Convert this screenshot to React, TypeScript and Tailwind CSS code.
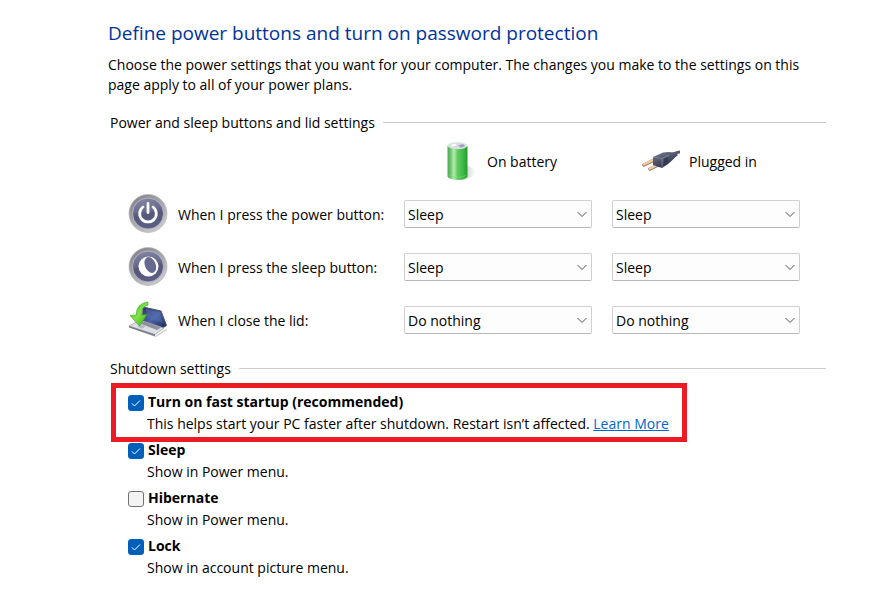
import { FC, ReactNode, useState } from 'react';

interface PowerActionRowProps {
  id: string;
  label: string;
  icon: ReactNode;
  action: string;
}

interface ShutdownOptionProps {
  id: string;
  title: string;
  defaultChecked?: boolean;
  highlighted?: boolean;
  children: ReactNode;
}

const ACTIONS = ['Do nothing', 'Sleep', 'Hibernate', 'Shut down'];

const BatteryIcon: FC = () => (
  <svg viewBox="0 0 40 40" className="size-10 shrink-0" aria-hidden="true">
    <defs>
      <linearGradient id="cell" x1="0" x2="1">
        <stop offset="0" stopColor="#4fa552" />
        <stop offset="0.15" stopColor="#6cc46e" />
        <stop offset="0.32" stopColor="#b4edb0" />
        <stop offset="0.5" stopColor="#5fcb5f" />
        <stop offset="0.8" stopColor="#3db544" />
        <stop offset="1" stopColor="#239a2d" />
      </linearGradient>
      <linearGradient id="cellShadow" x1="0" x2="1">
        <stop offset="0" stopColor="#777" stopOpacity="0.6" />
        <stop offset="1" stopColor="#aaa" stopOpacity="0" />
      </linearGradient>
    </defs>
    <path d="M27 24 37 29 Q38 34 28 38 L21 39Z" fill="url(#cellShadow)" />
    <path d="M8.500 5v30.500c2 4.500 18 4.500 20 0V5Z" fill="url(#cell)" />
    <ellipse cx="18.500" cy="4.700" rx="10" ry="3.500" fill="#cfe6d2" />
    <ellipse cx="18.500" cy="4.300" rx="7.500" ry="2.600" fill="#dcdbea" />
    <path d="M19 4.500 24 3l2 2-4 1.800Z" fill="#9f9ec2" />
    <path d="m12 4 4-1.400 1.500 1.700-4 1.500Z" fill="#fff" />
    <path d="M10 34c3 3 14 3 17 0" fill="none" stroke="#77dc6f" strokeWidth="1" opacity="0.600" />
  </svg>
);

const PlugIcon: FC = () => (
  <svg viewBox="0 0 40 40" className="size-10 shrink-0" aria-hidden="true">
    <defs>
      <linearGradient id="plugBody" x1="0" y1="0" x2="0.6" y2="1">
        <stop offset="0" stopColor="#7b8197" />
        <stop offset="0.5" stopColor="#50566d" />
        <stop offset="1" stopColor="#292e45" />
      </linearGradient>
    </defs>
    <path d="M30 14c4-1 5-3 9-3" fill="none" stroke="#5a5b62" strokeWidth="3" />
    <path d="m14 18.500-11 5.500" stroke="#a07c60" strokeWidth="3.600" strokeLinecap="round" />
    <path d="m14 18-11 5.500" stroke="#f0c9a2" strokeWidth="2.200" strokeLinecap="round" />
    <path d="m20 22.500-11 5.500" stroke="#a07c60" strokeWidth="3.600" strokeLinecap="round" />
    <path d="m20 22-11 5.500" stroke="#f4d0ac" strokeWidth="2.200" strokeLinecap="round" />
    <path d="m12 16 10-4.500c4-1 8-.500 12 0l3 2.500c-4 3-6 6-10 9l-6 4-9-3Z" fill="url(#plugBody)" />
    <path d="m12 16 9 1.500 7-3.500M21 17.500v9" fill="none" stroke="#8b91a6" strokeWidth="0.700" />
    <path d="m23 18 4-2v6l-4 3Z" fill="#343950" />
  </svg>
);

const RoundButton: FC<{ id: string; children: ReactNode }> = ({ id, children }) => (
  <svg viewBox="0 0 40 40" className="size-10 shrink-0" aria-hidden="true">
    <defs>
      <linearGradient id={`${id}-rim`} x1="0" y1="0" x2="0.7" y2="1">
        <stop offset="0" stopColor="#777a81" />
        <stop offset="0.5" stopColor="#a4a5aa" />
        <stop offset="1" stopColor="#cbcbce" />
      </linearGradient>
      <linearGradient id={`${id}-face`} x1="0" y1="0" x2="0.2" y2="1">
        <stop offset="0" stopColor="#8788a5" />
        <stop offset="0.48" stopColor="#686b8c" />
        <stop offset="0.6" stopColor="#555879" />
        <stop offset="1" stopColor="#5b5e82" />
      </linearGradient>
    </defs>
    <circle cx="20" cy="19.500" r="19" fill={`url(#${id}-rim)`} stroke="#b4b4b8" strokeWidth="0.700" />
    <circle cx="20" cy="19.500" r="15.500" fill={`url(#${id}-face)`} stroke="#bcbcca" strokeWidth="0.800" />
    {children}
  </svg>
);

const PowerIcon: FC = () => (
  <RoundButton id="power">
    <path
      d="M15 13a8.300 8.300 0 1 0 10 0M20 9.500v9"
      fill="none"
      stroke="#fff"
      strokeWidth="2.800"
      strokeLinecap="round"
    />
  </RoundButton>
);

const MoonIcon: FC = () => (
  <RoundButton id="sleep">
    <circle cx="20.500" cy="19.500" r="10" fill="#fff" />
    <ellipse cx="22.300" cy="18" rx="5.300" ry="8.300" fill="#666990" transform="rotate(-24 22.300 18)" />
  </RoundButton>
);

const LidIcon: FC = () => (
  <svg viewBox="0 0 40 40" className="size-10 shrink-0" aria-hidden="true">
    <defs>
      <linearGradient id="screen" x1="0" y1="0" x2="1" y2="1">
        <stop offset="0" stopColor="#2c3765" />
        <stop offset="0.5" stopColor="#4b62a6" />
        <stop offset="1" stopColor="#1f2955" />
      </linearGradient>
      <linearGradient id="arrow" x1="0" y1="0" x2="1" y2="1">
        <stop offset="0" stopColor="#3fae20" />
        <stop offset="0.5" stopColor="#7fe345" />
        <stop offset="1" stopColor="#37ab19" />
      </linearGradient>
    </defs>
    <path d="m2 28 25 8 11-7 1 1-11 7Z" fill="#999" opacity="0.500" />
    <path d="m15 7 18 4 5.500 14.500-4 2.500-20-7Z" fill="url(#screen)" stroke="#4b4e5e" strokeWidth="1" />
    <path d="m18 9 13 3 4 11-16-5Z" fill="#6681ca" opacity="0.300" />
    <path d="M1 26 12 20l24 8-9 6.500Z" fill="#dddfe5" stroke="#97989f" strokeWidth="0.700" />
    <path d="m12 23.500 4-2 17 6-4 2.500Z" fill="#8d909d" />
    <path d="m1 26 26 8.500v1.700L1 27.500Z" fill="#777983" />
    <path d="m9 26.500 4-2 5 1.500-4 2.500Z" fill="#b7bac6" />
    <path
      d="M20 2C12 3 8 8 8.500 15L2 15.500l9.500 10.500L19 14.500l-5.500.500C13 10 15 6.500 20 5Z"
      fill="url(#arrow)"
      stroke="#3c9f24"
      strokeWidth="0.600"
    />
  </svg>
);

const SectionHeading: FC<{ id: string; children: ReactNode }> = ({ id, children }) => (
  <div className="flex items-center gap-2 pl-0.5">
    <h2 id={id}>{children}</h2>
    <div className="mb-0.5 h-px flex-1 bg-[#cccccc]" />
  </div>
);

const ActionSelect: FC<{ label: string; action: string }> = ({ label, action }) => {
  const [value, setValue] = useState(action);

  return (
    <div className="grid items-center">
      <select
        aria-label={label}
        value={value}
        onChange={e => setValue(e.target.value)}
        className="col-start-1 row-start-1 h-7 w-full appearance-none rounded-xs border border-[#d0d0d0] border-b-[#b8b8b8] bg-[#fdfdfd] pt-0.5 pr-6 pl-[3px]"
      >
        {ACTIONS.map(item => (
          <option key={item}>{item}</option>
        ))}
      </select>
      <svg
        viewBox="0 0 10 10"
        className="pointer-events-none col-start-1 row-start-1 mr-[5px] size-2.5 justify-self-end"
        aria-hidden="true"
      >
        <path d="m.5 3 4.500 4.500L9.500 3" fill="none" stroke="#505050" />
      </svg>
    </div>
  );
};

const PowerActionRow: FC<PowerActionRowProps> = ({ id, label, icon, action }) => (
  <>
    <div className="flex h-10 items-center gap-2.5 whitespace-nowrap">
      {icon}
      <span id={id} className="pt-0.5">
        {label}
      </span>
    </div>
    <ActionSelect label={`${label} On battery`} action={action} />
    <ActionSelect label={`${label} Plugged in`} action={action} />
  </>
);

const ShutdownOption: FC<ShutdownOptionProps> = ({
  id,
  title,
  defaultChecked,
  highlighted,
  children,
}) => (
  <div className="relative w-fit">
    {highlighted && (
      <div className="pointer-events-none absolute -top-2 -right-[18px] -bottom-[7px] -left-[17px] border-5 border-[#ed1c24]" />
    )}
    <div className="flex items-center gap-1">
      <span className="grid pt-0.5">
        <input
          id={id}
          type="checkbox"
          defaultChecked={defaultChecked}
          className="peer col-start-1 row-start-1 size-4 appearance-none rounded-[3px] border border-[#707070] bg-[#f3f3f3] checked:border-[#005fb8] checked:bg-[#005fb8]"
        />
        <svg
          viewBox="0 0 16 16"
          className="pointer-events-none invisible col-start-1 row-start-1 size-4 peer-checked:visible"
          aria-hidden="true"
        >
          <path d="m4 8.500 2.500 2.500L12 5.500" fill="none" stroke="#fff" />
        </svg>
      </span>
      <label htmlFor={id} className="font-bold">
        {title}
      </label>
    </div>
    <p className="pl-[19px]">{children}</p>
  </div>
);

export default function App() {
  return (
    <main className="min-h-screen bg-white pt-5 pr-[55px] pb-6 pl-[108px] font-['Open_Sans','Noto_Sans',sans-serif] text-[14px] leading-[22px] text-black">
      <h1 className="text-[19px] leading-[26px] text-[#003399]">
        Define power buttons and turn on password protection
      </h1>
      <p className="mt-[9px] leading-5">
        Choose the power settings that you want for your computer. The changes you make to the
        settings on this page apply to all of your power plans.
      </p>

      <section aria-labelledby="buttons-heading" className="mt-[17px]">
        <SectionHeading id="buttons-heading">Power and sleep buttons and lid settings</SectionHeading>
        <div className="mt-[7px] grid grid-cols-[256px_minmax(0,188px)_minmax(0,188px)] items-center gap-x-5 gap-y-[13px] pl-5">
          <div className="col-start-2 flex items-center gap-2 pl-[35px]">
            <BatteryIcon />
            <span className="pt-0.5">On battery</span>
          </div>
          <div className="flex items-center gap-2 pl-[29px]">
            <PlugIcon />
            <span className="pt-0.5">Plugged in</span>
          </div>
          <PowerActionRow
            id="power-button"
            label="When I press the power button:"
            icon={<PowerIcon />}
            action="Sleep"
          />
          <PowerActionRow
            id="sleep-button"
            label="When I press the sleep button:"
            icon={<MoonIcon />}
            action="Sleep"
          />
          <PowerActionRow
            id="lid"
            label="When I close the lid:"
            icon={<LidIcon />}
            action="Do nothing"
          />
        </div>
      </section>

      <section aria-labelledby="shutdown-heading" className="mt-[18px]">
        <SectionHeading id="shutdown-heading">Shutdown settings</SectionHeading>
        <div className="mt-[11px] flex flex-col gap-1 pl-5">
          <ShutdownOption
            id="fast-startup"
            title="Turn on fast startup (recommended)"
            defaultChecked
            highlighted
          >
            This helps start your PC faster after shutdown. Restart isn’t affected.{' '}
            <a href="#learn-more" className="text-[#0066cc] underline">
              Learn More
            </a>
          </ShutdownOption>
          <ShutdownOption id="sleep-option" title="Sleep" defaultChecked>
            Show in Power menu.
          </ShutdownOption>
          <ShutdownOption id="hibernate-option" title="Hibernate">
            Show in Power menu.
          </ShutdownOption>
          <ShutdownOption id="lock-option" title="Lock" defaultChecked>
            Show in account picture menu.
          </ShutdownOption>
        </div>
      </section>
    </main>
  );
}
